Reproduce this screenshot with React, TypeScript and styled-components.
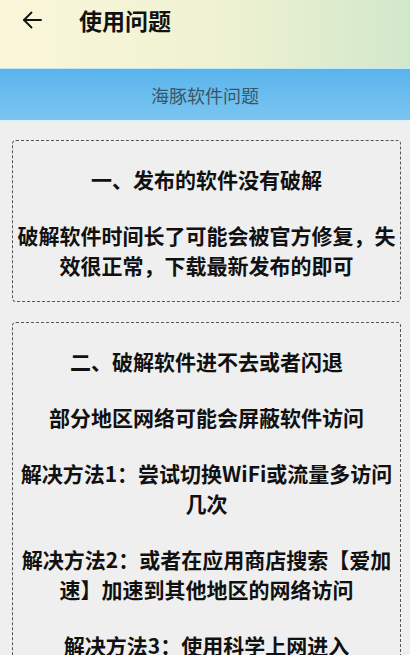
import React from "react";
import styled, { createGlobalStyle } from "styled-components";

const Global = createGlobalStyle`
  html, body { margin: 0; padding: 0; background: #efefef; }
  body { font-family: "Noto Sans CJK SC", "Noto Sans", sans-serif; }
  * { box-sizing: border-box; }
`;

const Page = styled.div`
  width: 410px;
  min-height: 655px;
  background: #efefef;
  overflow: hidden;
`;

const Header = styled.header`
  height: 68px;
  display: flex;
  align-items: flex-start;
  padding: 3px 0 0 20px;
  background: linear-gradient(90deg, #fbf6da 0%, #eef2d2 55%, #d2e8cb 100%);
`;

const BackButton = styled.button`
  width: 24px;
  height: 34px;
  padding: 0;
  border: none;
  background: none;
  display: flex;
  align-items: center;
  justify-content: center;
  color: #111;
`;

const Title = styled.h1`
  margin: 0 0 0 35px;
  font-size: 23px;
  line-height: 34px;
  font-weight: 700;
  color: #111;
`;

const Band = styled.div`
  height: 53px;
  display: flex;
  align-items: center;
  justify-content: center;
  background: linear-gradient(180deg, #5ab4ec 0%, #6abdee 50%, #7bc5f0 100%);
  border-top: 1px solid #bfe6f3;
  border-bottom: 1px solid #dcf0fa;
  font-size: 18px;
  color: #3b5566;
`;

const List = styled.main`
  display: flex;
  flex-direction: column;
  gap: 20px;
  padding: 19px 9px 0 12px;
`;

const Card = styled.section`
  border: 1px dashed #555;
  border-radius: 4px;
  padding: 23px 3px 21px;
  display: flex;
  flex-direction: column;
  gap: 26px;
  text-align: center;
`;

const Para = styled.p`
  margin: 0;
  font-size: 21px;
  line-height: 30px;
  font-weight: 700;
  color: #111;
`;

const cards = [
  [
    "一、发布的软件没有破解",
    "破解软件时间长了可能会被官方修复，失效很正常，下载最新发布的即可",
  ],
  [
    "二、破解软件进不去或者闪退",
    "部分地区网络可能会屏蔽软件访问",
    "解决方法1：尝试切换WiFi或流量多访问几次",
    "解决方法2：或者在应用商店搜索【爱加速】加速到其他地区的网络访问",
    "解决方法3：使用科学上网进入",
  ],
];

export default function App() {
  return (
    <Page>
      <Global />
      <Header>
        <BackButton aria-label="返回">
          <svg width="20" height="20" viewBox="0 0 20 20" fill="none" stroke="currentColor" strokeWidth="1.8" strokeLinecap="round" strokeLinejoin="round">
            <path d="M19 10H2" />
            <path d="M9.5 2.5L2 10l7.5 7.5" />
          </svg>
        </BackButton>
        <Title>使用问题</Title>
      </Header>
      <Band>海豚软件问题</Band>
      <List>
        {cards.map((c, i) => (
          <Card key={i}>
            {c.map((t, j) => (
              <Para key={j}>{t}</Para>
            ))}
          </Card>
        ))}
      </List>
    </Page>
  );
}
